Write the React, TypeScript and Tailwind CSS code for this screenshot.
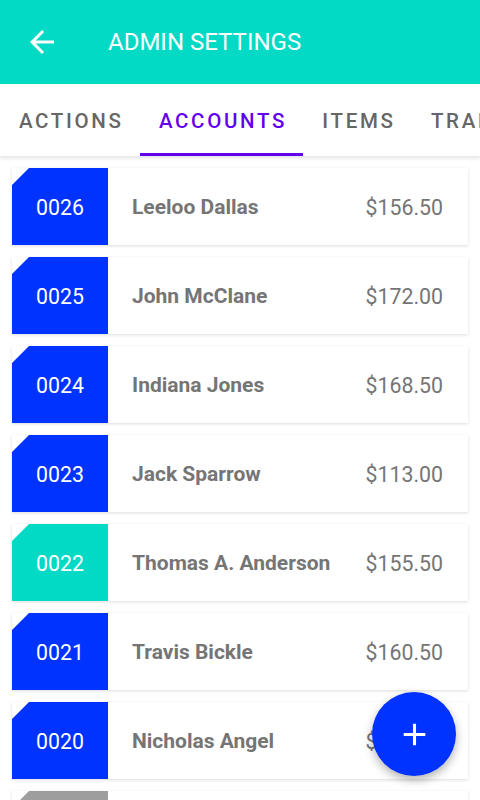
import React from "react";

const rows = [
  { id: "0026", name: "Leeloo Dallas", price: "$156.50", color: "bg-[#0033ff]" },
  { id: "0025", name: "John McClane", price: "$172.00", color: "bg-[#0033ff]" },
  { id: "0024", name: "Indiana Jones", price: "$168.50", color: "bg-[#0033ff]" },
  { id: "0023", name: "Jack Sparrow", price: "$113.00", color: "bg-[#0033ff]" },
  { id: "0022", name: "Thomas A. Anderson", price: "$155.50", color: "bg-[#03dac5]" },
  { id: "0021", name: "Travis Bickle", price: "$160.50", color: "bg-[#0033ff]" },
  { id: "0020", name: "Nicholas Angel", price: "$159.00", color: "bg-[#0033ff]" },
  { id: "0019", name: "Ellen Ripley", price: "$140.00", color: "bg-[#9e9e9e]" },
];

export default function App() {
  return (
    <div
      className="relative w-[480px] h-[800px] overflow-hidden bg-white"
      style={{ fontFamily: "Roboto, 'Noto Sans', sans-serif" }}
    >
      <header className="h-[84px] bg-[#03dac5] flex items-center">
        <div className="w-[108px] flex items-center pl-[24px]">
          <svg width="36" height="36" viewBox="0 0 24 24" fill="white">
            <path d="M20 11H7.83l5.59-5.59L12 4l-8 8 8 8 1.41-1.41L7.83 13H20v-2z" />
          </svg>
        </div>
        <h1 className="text-white text-[24px] font-normal leading-none">ADMIN SETTINGS</h1>
      </header>
      <nav className="relative z-10 h-[72px] bg-white flex shadow-[0_2px_4px_rgba(0,0,0,0.12)] overflow-hidden">
        {["ACTIONS", "ACCOUNTS", "ITEMS", "TRANSACTIONS"].map((t, i) => (
          <div
            key={t}
            className={`relative shrink-0 h-full flex items-center pt-[2px] px-[19px] text-[20.5px] font-medium tracking-[0.13em] ${
              i === 1 ? "text-[#6200ee]" : "text-[#666666]"
            }`}
          >
            <span className="mr-[-0.13em]">{t}</span>
            {i === 1 && <div className="absolute left-0 right-0 bottom-0 h-[3px] bg-[#6200ee]" />}
          </div>
        ))}
      </nav>
      <main className="flex flex-col gap-[12px] px-[12px] pt-[12px]">
        {rows.map((r) => (
          <div
            key={r.id}
            className="shrink-0 h-[77px] flex items-stretch bg-white shadow-[0_1px_3px_rgba(0,0,0,0.14)]"
          >
            <div
              className={`w-[96px] shrink-0 flex items-center justify-center pt-[2px] text-white text-[21.3px] ${r.color}`}
              style={{ clipPath: "polygon(17px 0, 100% 0, 100% 100%, 0 100%, 0 17px)" }}
            >
              {r.id}
            </div>
            <div className="flex-1 flex items-center justify-between pt-[2px] pl-[24px] pr-[25px]">
              <span className="text-[21px] font-bold text-[#757575]">{r.name}</span>
              <span className="text-[21.3px] text-[#757575]">{r.price}</span>
            </div>
          </div>
        ))}
      </main>
      <button className="absolute left-[372px] top-[692px] w-[84px] h-[84px] rounded-full bg-[#0033ff] flex items-center justify-center shadow-[0_4px_10px_rgba(0,0,0,0.3)]">
        <svg width="37" height="37" viewBox="0 0 24 24" fill="white">
          <path d="M19 13h-6v6h-2v-6H5v-2h6V5h2v6h6v2z" />
        </svg>
      </button>
    </div>
  );
}
